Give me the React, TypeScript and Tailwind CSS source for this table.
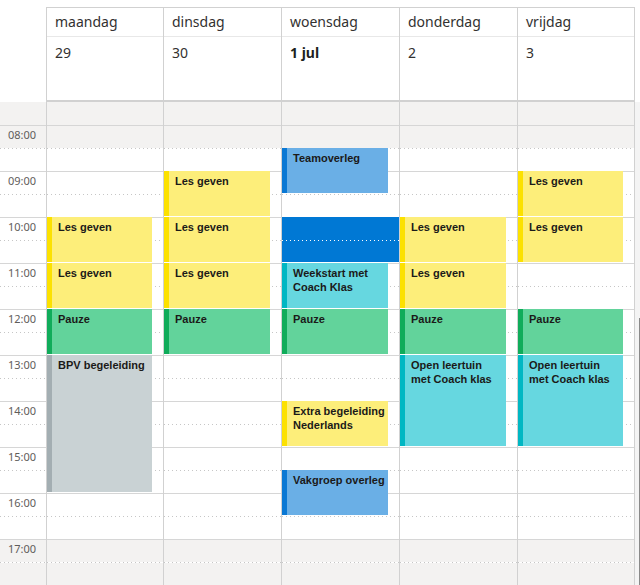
import React from 'react';

// one hour row is 46px, the grid starts at 07:30
const HOUR = 46;
const START = 7.5;

type Tone = 'yellow' | 'green' | 'teal' | 'blue' | 'gray';

const tones: Record<Tone, { bg: string; bar: string }> = {
  yellow: { bg: 'bg-[#fdee7a]', bar: 'bg-[#fce100]' },
  green: { bg: 'bg-[#62d39b]', bar: 'bg-[#10ac5a]' },
  teal: { bg: 'bg-[#66d7e0]', bar: 'bg-[#00b7c3]' },
  blue: { bg: 'bg-[#6aafe6]', bar: 'bg-[#0a78d4]' },
  gray: { bg: 'bg-[#c9d2d4]', bar: 'bg-[#a3aeb2]' },
};

type Ev = { title: string; start: number; end: number; tone: Tone };

const days: { name: string; date: string; bold?: boolean; w: string; last?: boolean; events: Ev[]; selected?: number }[] = [
  {
    name: 'maandag',
    date: '29',
    w: 'w-[117px]',
    events: [
      { title: 'Les geven', start: 10, end: 11, tone: 'yellow' },
      { title: 'Les geven', start: 11, end: 12, tone: 'yellow' },
      { title: 'Pauze', start: 12, end: 13, tone: 'green' },
      { title: 'BPV begeleiding', start: 13, end: 16, tone: 'gray' },
    ],
  },
  {
    name: 'dinsdag',
    date: '30',
    w: 'w-[118px]',
    events: [
      { title: 'Les geven', start: 9, end: 10, tone: 'yellow' },
      { title: 'Les geven', start: 10, end: 11, tone: 'yellow' },
      { title: 'Les geven', start: 11, end: 12, tone: 'yellow' },
      { title: 'Pauze', start: 12, end: 13, tone: 'green' },
    ],
  },
  {
    name: 'woensdag',
    date: '1 jul',
    bold: true,
    w: 'w-[118px]',
    selected: 10,
    events: [
      { title: 'Teamoverleg', start: 8.5, end: 9.5, tone: 'blue' },
      { title: 'Weekstart met Coach Klas', start: 11, end: 12, tone: 'teal' },
      { title: 'Pauze', start: 12, end: 13, tone: 'green' },
      { title: 'Extra begeleiding Nederlands', start: 14, end: 15, tone: 'yellow' },
      { title: 'Vakgroep overleg', start: 15.5, end: 16.5, tone: 'blue' },
    ],
  },
  {
    name: 'donderdag',
    date: '2',
    w: 'w-[118px]',
    events: [
      { title: 'Les geven', start: 10, end: 11, tone: 'yellow' },
      { title: 'Les geven', start: 11, end: 12, tone: 'yellow' },
      { title: 'Pauze', start: 12, end: 13, tone: 'green' },
      { title: 'Open leertuin met Coach klas', start: 13, end: 15, tone: 'teal' },
    ],
  },
  {
    name: 'vrijdag',
    date: '3',
    w: 'w-[118px]',
    last: true,
    events: [
      { title: 'Les geven', start: 9, end: 10, tone: 'yellow' },
      { title: 'Les geven', start: 10, end: 11, tone: 'yellow' },
      { title: 'Pauze', start: 12, end: 13, tone: 'green' },
      { title: 'Open leertuin met Coach klas', start: 13, end: 15, tone: 'teal' },
    ],
  },
];

const hours = [8, 9, 10, 11, 12, 13, 14, 15, 16, 17];

const Dots = ({ white }: { white?: boolean }) => (
  <div className={`h-px ${white ? 'bg-[#0078d4]' : 'bg-white'}`}>
    <div
      className={`h-px w-full bg-[length:4px_1px] ${
        white
          ? 'bg-[linear-gradient(to_right,#ffffff_1px,transparent_1px)]'
          : 'bg-[linear-gradient(to_right,#c6c6c6_1px,transparent_1px)]'
      }`}
    />
  </div>
);

// hour rows behind the events; 08:00-08:30 and 17:00 are outside working hours
function HourRows({ labels }: { labels?: boolean }) {
  return (
    <>
      <div className="h-[23px] bg-[#f3f2f1]" />
      {hours.map((h) => (
        <div key={h} className="h-[46px] border-t border-[#d6d6d6] flex flex-col">
          <div className={`h-[22px] ${h === 8 || h === 17 ? 'bg-[#f3f2f1]' : 'bg-white'}`}>
            {labels && (
              <span className="block pl-[8px] pt-[1px] text-[11px] leading-[15px] text-[#5f5d5b]">
                {String(h).padStart(2, '0')}:00
              </span>
            )}
          </div>
          <Dots />
          <div className={`h-[22px] ${h === 17 ? 'bg-[#f3f2f1]' : 'bg-white'}`} />
        </div>
      ))}
    </>
  );
}

function EventCard({ ev }: { ev: Ev }) {
  const t = tones[ev.tone];
  return (
    <div
      className={`absolute left-0 right-[11px] flex ${t.bg}`}
      style={{ top: (ev.start - START) * HOUR, height: (ev.end - ev.start) * HOUR - 1 }}
    >
      <div className={`w-[5px] shrink-0 ${t.bar}`} />
      <div className="pl-[6px] pr-[3px] pt-[3px] font-['Liberation_Sans',sans-serif] text-[11px] leading-[14px] font-bold text-[#1b1a19]">
        {ev.title}
      </div>
    </div>
  );
}

export default function App() {
  return (
    <div className="w-[640px] h-[585px] overflow-hidden bg-white font-['Noto_Sans',sans-serif] text-[#323130]">
      {/* day header */}
      <div className="flex pt-[7px]">
        <div className="w-[46px] shrink-0" />
        {days.map((d) => (
          <div
            key={d.name}
            className={`${d.w} shrink-0 border-t border-l border-b-2 border-[#d1d1d1] ${d.last ? 'border-r' : ''}`}
          >
            <div className="h-[29px] border-b border-[#e8e8e8] pl-[8px] pt-[4px] text-[14px] leading-[20px]">{d.name}</div>
            <div className={`h-[63px] pl-[8px] pt-[6px] text-[14px] leading-[20px] ${d.bold ? 'font-bold text-[#201f1e]' : ''}`}>
              {d.date}
            </div>
          </div>
        ))}
      </div>

      {/* time grid */}
      <div className="flex">
        <div className="w-[46px] shrink-0 flex flex-col">
          <HourRows labels />
        </div>
        {days.map((d) => (
          <div
            key={d.name}
            className={`${d.w} shrink-0 relative flex flex-col border-l border-[#d1d1d1] ${d.last ? 'border-r' : ''}`}
          >
            <HourRows />
            {d.selected !== undefined && (
              <div
                className="absolute left-0 right-0 flex flex-col bg-[#0078d4]"
                style={{ top: (d.selected - START) * HOUR, height: HOUR - 1 }}
              >
                <div className="h-[23px]" />
                <Dots white />
              </div>
            )}
            {d.events.map((ev, i) => (
              <EventCard key={i} ev={ev} />
            ))}
          </div>
        ))}
        {/* scrollbar track */}
        <div className="w-[5px] shrink-0 flex flex-col bg-[#f4f4f4]">
          <div className="h-[216px]" />
          <div className="flex-1 border-r border-[#8a8a8a]" />
        </div>
      </div>
    </div>
  );
}
